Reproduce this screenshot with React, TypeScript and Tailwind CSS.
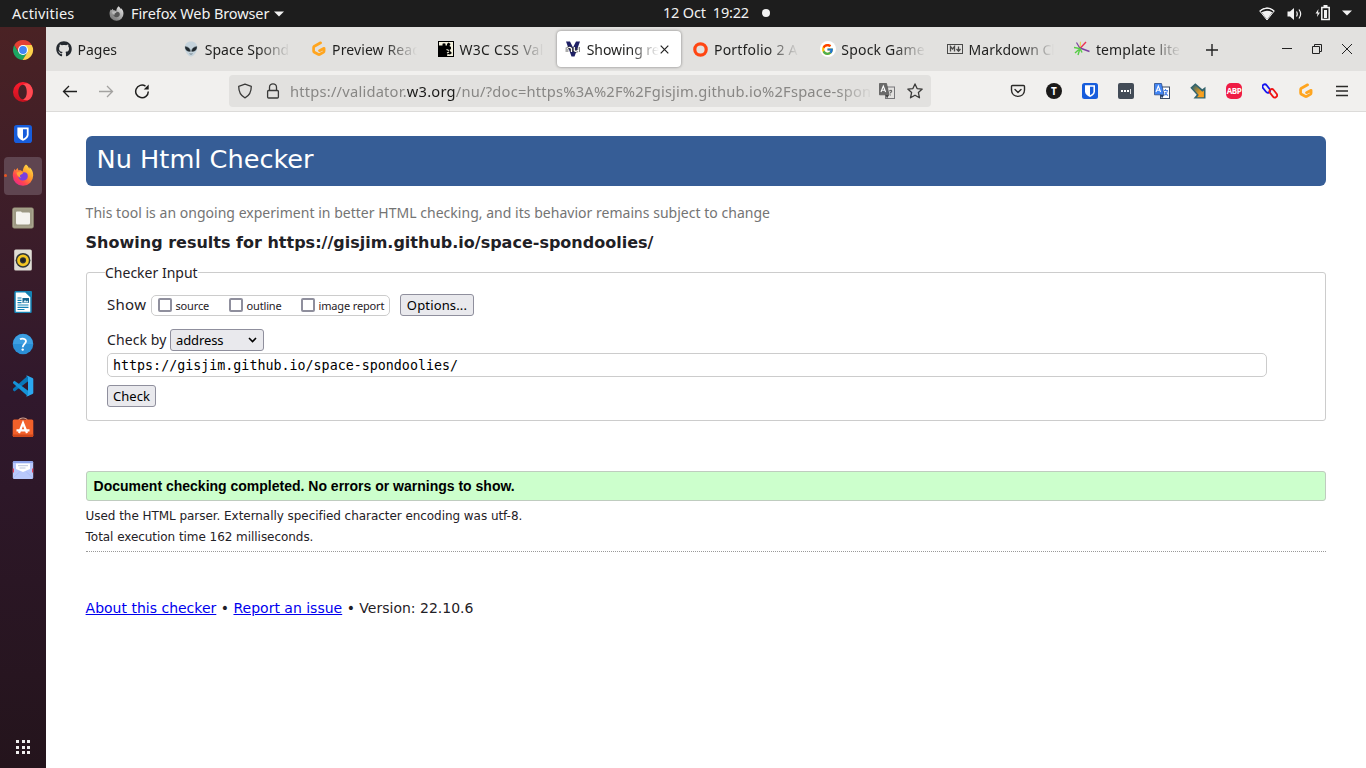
import React from "react";
import { FaGithub } from "react-icons/fa";
import { FcGoogle } from "react-icons/fc";

type P = { children?: React.ReactNode };

const Chrome = () => (
  <svg width="22" height="22" viewBox="0 0 22 22">
    <path d="M6.5 13.3 2.3 6A10 10 0 0 0 10.6 21L15.3 13.5Z" fill="#1da462" />
    <path d="M2.3 6A10 10 0 0 1 19.7 6H11L6.6 13Z" fill="#e34133" />
    <path d="M15.3 13.5 10.6 21A10 10 0 0 0 19.7 6H11Z" fill="#fcd04b" />
    <circle cx="11" cy="11" r="5" fill="#fff" />
    <circle cx="11" cy="11" r="3.9" fill="#4285f4" />
  </svg>
);
const Opera = () => (
  <svg width="22" height="22" viewBox="0 0 22 22">
    <defs>
      <linearGradient id="op" x1="0" x2="0" y1="0" y2="1">
        <stop offset="0" stopColor="#ff1b2d" />
        <stop offset="1" stopColor="#c1121f" />
      </linearGradient>
    </defs>
    <path d="M11 1a10 10 0 1 0 0 20 10 10 0 0 0 0-20Zm0 2.8c2.6 0 4.600 3.200 4.600 7.200s-2 7.200-4.600 7.200-4.700-3.200-4.700-7.200 2.100-7.200 4.700-7.200Z" fill="url(#op)" fillRule="evenodd" />
    <path d="M11 3.800c5 0 5 14.400 0 14.400 1.500 1.200 4 1.300 6 .500A10 10 0 0 0 17 3c-2-.8-4.500-.4-6 .8Z" fill="#ff4b53" />
  </svg>
);
const Bitwarden = ({ s = 16 }: { s?: number }) => (
  <svg width={s} height={s} viewBox="0 0 16 16">
    <rect width="16" height="16" rx="2.500" fill="#175ddc" />
    <path d="M3 2.200h10v6.300c0 2.500-2.300 4.500-5 5.500-2.700-1-5-3-5-5.500Z" fill="#fff" />
    <path d="M8 3.800h3.400v4.700c0 1.600-1.500 2.900-3.400 3.800Z" fill="#175ddc" />
  </svg>
);
const Firefox = ({ s = 22, gray = false }: { s?: number; gray?: boolean }) => {
  const id = gray ? "g" : "c";
  return (
    <svg width={s} height={s} viewBox="0 0 22 22">
      <defs>
        <linearGradient id={"fx" + id} x1="1" y1="0" x2="0.200" y2="1">
          <stop offset="0" stopColor={gray ? "#f2f2f2" : "#fff14f"} />
          <stop offset="0.450" stopColor={gray ? "#b5b5b5" : "#ff9a2b"} />
          <stop offset="0.750" stopColor={gray ? "#8c8c8c" : "#ff4450"} />
          <stop offset="1" stopColor={gray ? "#777" : "#e62690"} />
        </linearGradient>
      </defs>
      <path d="M14 0.500c2 1.200 2.400 3 3.500 4.300 0-.8 0-1.200-.2-1.800C20 5 21.300 8 21.200 11.500A10.200 10.200 0 0 1 .8 11.700C.7 8.700 1.700 6.300 2.900 4.700c.1.800.3 1.200.6 1.700.7-1.300 1.500-2 2.300-2.500 0 1 .3 1.800.8 2.500 1.600-.3 2.900.3 4 1.200C11 4.500 12 2 14 .5Z" fill={`url(#fx${id})`} />
      <path d="M7 9.200c1.500.8 3.300.6 4.200-.8 2.800-.3 4.800 1.300 4.600 4-.2 2.500-2.200 4-4.800 4s-5-2-4.700-5Z" fill={gray ? "#555" : "#7a3fe0"} />
      <path d="M4.500 8.600c2-1 3.800-.6 6.600.5-.8 1.300-2.200 1.300-3 2.200-.5.900.2 1.900 1.200 2.600C6.700 13.800 4.800 11.500 4.500 8.600Z" fill={gray ? "#bbb" : "#ffa436"} />
    </svg>
  );
};
const Files = () => (
  <svg width="22" height="22" viewBox="0 0 22 22">
    <rect x="0.500" y="0.800" width="21" height="20.400" rx="1.800" fill="#aaa48e" stroke="#8b866f" strokeWidth=".6" />
    <rect x="2" y="2.300" width="18" height="17" rx="1" fill="#9d9883" />
    <path d="M4 5.500q0-1 1-1h4l1 1h7q1 0 1 1V16q0 1.500-1.500 1.500h-11Q4 17.500 4 16Z" fill="#f5f3ef" />
  </svg>
);
const Rhythm = () => (
  <svg width="20" height="22" viewBox="0 0 20 22">
    <rect x="1.200" y=".6" width="17.600" height="20.800" rx="1.500" fill="#dfddd5" />
    <circle cx="10" cy="11.300" r="7.400" fill="#303638" />
    <circle cx="10" cy="11.300" r="4.500" fill="none" stroke="#f3c622" strokeWidth="2.800" />
    <circle cx="10" cy="11.300" r="2" fill="#222" />
  </svg>
);
const Writer = () => (
  <svg width="18" height="22" viewBox="0 0 18 22">
    <path d="M2 .7h9.500L17 6v14.500q0 1-1 1H2q-1 0-1-1V1.700q0-1 1-1Z" fill="#fff" stroke="#1583b5" strokeWidth="1.500" />
    <path d="M11.500 0 18 6.500V1q0-1-1-1Z" fill="#1583b5" />
    <path d="M3.500 7h4M3.500 9.300h4M3.500 11.600h4M3.500 14h11M3.500 16.300h11M3.500 18.500h7" stroke="#1583b5" strokeWidth="1.200" />
    <rect x="8.500" y="7" width="6.500" height="5" fill="#16648c" />
    <path d="m9 11.500 2-2.500 1.500 1.500 1-1 1 2Z" fill="#d7f0fa" />
  </svg>
);
const Help = () => (
  <svg width="22" height="22" viewBox="0 0 22 22">
    <circle cx="11" cy="11" r="10.300" fill="#2b8fd6" />
    <path d="M1 11a10 10 0 0 1 20 0Z" fill="#3d9fe2" />
    <path d="M8 6.300c2-1.200 6-.8 6 2 0 2.400-3.300 2.900-3.300 6" fill="none" stroke="#fff" strokeWidth="1.800" />
    <circle cx="10.700" cy="16.600" r="1.200" fill="#fff" />
  </svg>
);
const Code = () => (
  <svg width="22" height="22" viewBox="0 0 22 22">
    <path d="M15.500 1 1 13.700v1.500l1.500 1.200L16.500 6V1Z" fill="#0877b9" />
    <path d="M15.500 21 1 8.300V6.900l1.500-1.200L16.500 16v5Z" fill="#1593d8" />
    <path d="m15.500.7 5 2.300q.8.400.8 1.200v13.600q0 .8-.8 1.200l-5 2.300q-.9.300-1.500-.3l2-1V2l-2-1q.600-.6 1.500-.3Z" fill="#2ba8f0" />
  </svg>
);
const Software = () => (
  <svg width="22" height="22" viewBox="0 0 22 22">
    <path d="M6.700 4c0-4 8.600-4 8.600 0" fill="none" stroke="#d9a28c" strokeWidth="1.200" />
    <rect x=".700" y="2.500" width="20.600" height="17.500" rx="1.500" fill="#f2602a" />
    <path d="M.7 17.500h20.600v1q0 1.500-1.500 1.500H2.200Q.7 20 .7 18.500Z" fill="#cf481c" />
    <path d="m7 16 4-10 4 10M4.500 13.300h13" fill="none" stroke="#fff" strokeWidth="2.200" />
  </svg>
);
const Mail = () => (
  <svg width="22" height="22" viewBox="0 0 22 22">
    <rect x=".8" y="2" width="20.400" height="18" rx="1.500" fill="#b9c8fb" />
    <path d="M.8 9.500h1.200v4H.8Zm19.200 0h1.200v4H20Z" fill="#e2445c" />
    <path d="M.8 4v-.5Q.8 2 2.300 2h17.400q1.500 0 1.500 1.500V4Z" fill="#8ea4ea" />
    <path d="M4 4.500h14V10l-7 3L4 10Z" fill="#fff" />
    <path d="M6 6.700h10M7.500 9h6" stroke="#b6bfd8" strokeWidth=".9" />
    <path d="m1 19 7-6.500M21 19l-7-6.500" stroke="#a2b4f2" strokeWidth=".6" />
  </svg>
);
const Gitpod = () => (
  <svg width="16" height="16" viewBox="0 0 16 16">
    <path d="M9.600 1.800 3.400 5.200q-.8.500-.8 1.400v3.300q0 .9.800 1.400l3.700 2q.9.500 1.800 0l3.400-1.900q.8-.5.800-1.400V7.300L8.500 9.700" fill="none" stroke="#ffa51f" strokeWidth="2.700" strokeLinecap="round" strokeLinejoin="round" />
  </svg>
);
const Alien = () => (
  <svg width="16" height="16" viewBox="0 0 16 16">
    <path d="M8 .5c4 0 6.300 2.700 6.300 6.300 0 4-3.600 8.700-6.300 8.700S1.700 10.800 1.700 6.800C1.700 3.200 4 .5 8 .5Z" fill="#c5d3dc" />
    <path d="M2.300 5.700c2.700.2 4.800 1.800 5 4.600-2.900.4-5-1.300-5-4.600Zm11.400 0c-2.700.2-4.800 1.800-5 4.600 2.900.4 5-1.300 5-4.600Z" fill="#20282e" stroke="#20282e" strokeWidth=".6" />
    <path d="M6.500 12.700q1.500 1 3 0" stroke="#60707a" fill="none" strokeWidth=".8" />
  </svg>
);
const CssVal = () => (
  <svg width="16" height="16" viewBox="0 0 16 16">
    <rect width="16" height="16" fill="#000" />
    <path d="M1 1h14v14H1Z" fill="#f4f1dd" />
    <path d="M1 4.500h3.500V2.800q1.500-1.300 3 0v1.700H9V3l1.500-1.500L12.500 3l-1 2 1.500 1v2l-1.500 1 1 1.500L14 12l-2 1.500-2.500-.5-.5 2H1Z" fill="#000" />
    <path d="M8.500 8.500 11 9.500M9 12l2-1" stroke="#f4f1dd" strokeWidth="1.100" />
  </svg>
);
const NuIcon = () => (
  <svg width="16" height="16" viewBox="0 0 16 16">
    <path d="M1 .5h4l3 6 3-6h4L9.500 15.500h-3Z" fill="#1e2065" />
    <path d="M2 11V6.500M2 8q2-2.800 4.500-.5V11M9.300 6v3.500q1.500 1.800 4.500-.5V6M13.800 6v5" stroke="#333" strokeWidth="2.400" fill="none" />
    <path d="M2 11V6.500M2 8q2-2.800 4.500-.5V11M9.300 6v3.500q1.500 1.800 4.500-.5V6M13.800 6v5" stroke="#fff" strokeWidth="1.200" fill="none" />
  </svg>
);
const Ring = () => (
  <svg width="16" height="16" viewBox="0 0 16 16"><circle cx="8.500" cy="8.500" r="5.700" fill="none" stroke="#ff4613" strokeWidth="3.200" /></svg>
);
const GIcon = () => (
  <span className="flex size-4 items-center justify-center rounded-full bg-white"><FcGoogle size={13} /></span>
);
const Markdown = () => (
  <svg width="16" height="16" viewBox="0 0 16 16" fill="none" stroke="#4a4a49">
    <rect x=".5" y="3.500" width="15" height="9" strokeWidth="1" />
    <path d="M3.500 10.500v-5l2 2.500 2-2.500v5" strokeWidth="1.300" />
    <path d="M11.500 5.500v4M9.500 8l2 2.300 2-2.300" strokeWidth="1.300" />
  </svg>
);
const Burst = () => (
  <svg width="16" height="16" viewBox="0 0 16 16" fill="none" strokeWidth="1.200">
    <path d="M6 7.500 6.500.8" stroke="#e8d44c" />
    <path d="m6 7.500 6-6.500" stroke="#ee3355" strokeWidth="1.400" />
    <path d="M6 7.500 2.500 1.500" stroke="#7b3fa0" />
    <path d="m6 7 9.500 3.500" stroke="#7b3fa0" strokeWidth="1.500" />
    <path d="M0 6.500 6 7.500 4 14M6 7.500 1 12M6 7.500l2 4" stroke="#56cc45" strokeWidth="1.400" />
  </svg>
);

const tabs = [
  { icon: <FaGithub size={16} color="#24292f" />, name: "Pages", tr: "tracking-[0px]" },
  { icon: <Alien />, name: "Space Spond", tr: "tracking-[0px]" },
  { icon: <Gitpod />, name: "Preview Read", tr: "tracking-[0.1px]" },
  { icon: <CssVal />, name: "W3C CSS Val", tr: "tracking-[0.300px]" },
  { icon: <NuIcon />, name: "Showing re", tr: "tracking-[-0.05px]", active: true },
  { icon: <Ring />, name: "Portfolio 2 A", tr: "tracking-[0.2px]" },
  { icon: <GIcon />, name: "Spock Game", tr: "tracking-[0.200px]" },
  { icon: <Markdown />, name: "Markdown Cl", tr: "tracking-[0px]" },
  { icon: <Burst />, name: "template lite", tr: "tracking-[0.1px]" },
];

const Translate = ({ color = false }: { color?: boolean }) => (
  <svg width="16" height="16" viewBox="0 0 16 16">
    <rect x="6.500" y="4" width="9" height="11.500" fill={color ? "#fff" : "#e2e1df"} stroke={color ? "#3c4a63" : "#77777a"} />
    <path d={color ? "M10 7.500h4M11.500 6v1.500M13.500 7.500q-.5 3-3 5M11 9q1 2.500 3 3.500" : "M10.300 8q2.400-1.500 2.400.4-.2 1-1.400 1.400v.8m0 1v1"} stroke={color ? "#4d83e8" : "#666"} fill="none" strokeWidth="1.100" />
    <path d="M.5.500h7l2.500 11.300H.5Z" fill={color ? "#4285f4" : "#6a6a6a"} stroke={color ? "#2b4a85" : "#5a5a5a"} strokeWidth=".8" />
    <path d="m2 9 2.300-6 2.300 6M2.800 7.200h3" stroke="#fff" fill="none" strokeWidth="1.100" />
    <path d="m6.500 12 3.500 0-2 3.500Z" fill={color ? "#23406f" : "#444"} />
  </svg>
);
const Arrow = () => (
  <svg width="16" height="16" viewBox="0 0 16 16">
    <defs>
      <linearGradient id="arw" x1="0" y1="0" x2="1" y2="1">
        <stop offset=".05" stopColor="#33646d" />
        <stop offset=".45" stopColor="#b08a35" />
        <stop offset=".7" stopColor="#f9a01e" />
      </linearGradient>
    </defs>
    <path d="M.3 4.800 5.300.3l7 6 3.200-2.500v11.700H3.500l3.200-3.700Z" fill="#33646d" />
    <path d="M2.300 4.800 5.300 2.200l7 6.500 1.600-1.300v6.800H7l1.800-2.200Z" fill="url(#arw)" />
  </svg>
);
const Chain = () => (
  <svg width="16" height="16" viewBox="0 0 16 16" fill="none" strokeWidth="1.800">
    <rect x="2" y=".8" width="4.600" height="9.400" rx="2.300" transform="rotate(-38 4.300 5.500)" stroke="#1414f0" />
    <rect x="9" y="5.600" width="4.600" height="9.400" rx="2.300" transform="rotate(-38 11.300 10.300)" stroke="#f01414" />
  </svg>
);

const extensions = [
  <svg width="16" height="16" viewBox="0 0 16 16" fill="none" stroke="#2b2a28" strokeWidth="1.400" strokeLinecap="round" strokeLinejoin="round"><path d="M2.500 2.500h11q1 0 1 1V7c0 8.500-13 8.500-13 0V3.500q0-1 1-1Z" /><path d="m5 6.500 3 3 3-3" /></svg>,
  <span className="flex size-4 items-center justify-center rounded-full bg-[#1b1a19] font-['Noto_Sans'] text-[10px] font-bold text-white">T</span>,
  <Bitwarden />,
  <span className="flex size-4 items-center justify-center gap-[1px] rounded-[2px] bg-[#434c57]">
    <i className="size-[2px] bg-white" /><i className="size-[2px] bg-white" /><i className="size-[2px] bg-white" /><i className="h-[5px] w-px bg-white/80" />
  </span>,
  <Translate color />,
  <Arrow />,
  <span className="flex size-4 items-center justify-center rounded-[5px] bg-[#ef1c44] font-['Open_Sans'] text-[8px] font-bold tracking-[-0.4px] text-white">ABP</span>,
  <Chain />,
  <Gitpod />,
  <svg width="16" height="16" viewBox="0 0 16 16" stroke="#2b2a28" strokeWidth="1.300"><path d="M2 3.500h12M2 8h12M2 12.500h12" /></svg>,
];

function TopBar() {
  return (
    <header className="flex h-[27px] shrink-0 items-center bg-[#1d1d1d] pl-3 pr-[14px] text-[14.500px] text-[#f2f2f2]">
      <span className="w-[97px] tracking-[0.2px]">Activities</span>
      <Firefox s={15} gray />
      <span className="ml-[7px] w-[139px] whitespace-nowrap tracking-[-0.1px]">Firefox Web Browser</span>
      <svg className="ml-[4px]" width="10" height="6"><path d="M0 .5h10l-5 5Z" fill="#f2f2f2" /></svg>
      <span className="mb-px ml-[379px] w-[87px] whitespace-pre tracking-[-0.2px]">12 Oct  19:22</span>
      <span className="mb-px ml-[12px] size-2 rounded-full bg-[#f2f2f2]" />
      <div className="ml-auto flex items-center">
        <svg width="16" height="14" viewBox="0 0 16 14"><path d="M.8 4Q8-1.800 15.200 4L8 13Z" fill="none" stroke="#f2f2f2" strokeWidth="1" /><path d="M2.600 5.300Q8 2 13.400 5.300L8 12.500Z" fill="#f2f2f2" /><path d="M.8 4Q8-1.800 15.200 4" stroke="#f2f2f2" strokeWidth="1.300" fill="none" /></svg>
        <svg className="ml-3" width="16" height="14" viewBox="0 0 16 14"><path d="M.5 4.500H3L7 1v12L3 9.500H.5Z" fill="#f2f2f2" /><path d="M9.500 4.500q1.500 2.500 0 5M12 2.500q3.300 4.500 0 9" stroke="#f2f2f2" strokeWidth="1.200" fill="none" /></svg>
        <svg className="mb-px ml-3" width="16" height="16" viewBox="0 0 16 16"><path d="M3.500 4 .5 8.500h2L2 12l3-4.500H3Z" fill="#f2f2f2" /><rect x="6.800" y="2.500" width="7.400" height="12" fill="none" stroke="#f2f2f2" strokeWidth="1.500" /><path d="M8.500 0h4v2h-4ZM9 5h3v8H9Z" fill="#f2f2f2" /></svg>
        <svg className="mb-px ml-[11px]" width="10" height="6"><path d="M0 .5h10l-5 5Z" fill="#f2f2f2" /></svg>
      </div>
    </header>
  );
}

function Dock() {
  const icons = [<Chrome />, <Opera />, <Bitwarden s={18} />, <Firefox />, <Files />, <Rhythm />, <Writer />, <Help />, <Code />, <Software />, <Mail />];
  return (
    <nav className="flex w-[46px] shrink-0 flex-col items-center bg-linear-to-b from-[#4a2224] via-[#30182c] via-50% to-[#24141c] pb-[14px] pt-[2px]">
      {icons.map((icon, i) => (
        <div key={i} className="flex h-[42px] w-full items-center justify-center">
          {i === 3 ? (
            <div className="relative flex h-[38px] w-[38px] items-center justify-center rounded-[4px] bg-[#5f4550] pb-[2px]">
              {icon}
              <i className="absolute left-0 top-[17px] h-[3px] w-[3px] rounded-full bg-[#e95420]" />
            </div>
          ) : icon}
        </div>
      ))}
      <div className="mt-auto grid grid-cols-3 gap-[2.500px]">
        {Array.from({ length: 9 }, (_, i) => <i key={i} className="size-[3px] bg-[#f0eeee]" />)}
      </div>
    </nav>
  );
}

function TabStrip() {
  return (
    <div className="flex h-[44px] shrink-0 items-center bg-[#e2e1df] pl-[1px] text-[14px] text-[#1f1f1e]">
      {tabs.map((t) => (
        <div key={t.name} className="flex h-[36px] w-[127.300px] shrink-0 items-center">
          <div className={`ml-[1px] flex h-full w-[124px] items-center rounded-[4px] pl-2 ${t.active ? "bg-white shadow-[0_0_3px_rgba(0,0,0,0.45)]" : ""}`}>
            <span className="flex size-4 shrink-0 items-center justify-center">{t.icon}</span>
            <span className={`ml-[5.500px] shrink-0 whitespace-nowrap ${t.active ? "w-[72px] mask-[linear-gradient(to_right,#000_60%,transparent_100%)]" : "w-[85px] mask-[linear-gradient(to_right,#000_62%,transparent_100%)]"} ${t.tr}`}>{t.name}</span>
            {t.active && <svg className="ml-[1.500px]" width="9" height="9" viewBox="0 0 9 9"><path d="m.7.7 7.600 7.600M8.300.7.7 8.300" stroke="#222" strokeWidth="1.200" /></svg>}
          </div>
        </div>
      ))}
      <svg className="ml-[13px] mt-px" width="12" height="12"><path d="M0 6h12M6 0v12" stroke="#222" strokeWidth="1.400" /></svg>
      <div className="ml-auto mr-[14px] flex items-center gap-[20px]">
        <svg width="10" height="10"><path d="M0 4.500h10" stroke="#222" /></svg>
        <svg width="10" height="10"><path d="M.5 2.500h7v7h-7ZM2.500 2.500v-2h7v7h-2" fill="none" stroke="#222" /></svg>
        <svg width="10" height="10"><path d="m0 0 10 10M10 0 0 10" stroke="#222" /></svg>
      </div>
    </div>
  );
}

function NavBar() {
  return (
    <div className="flex h-[41px] shrink-0 items-center border-b border-[#dcdbd9] bg-[#f1f0ee] pl-[16px]">
      <div className="flex gap-[20px]">
        <svg width="16" height="16" fill="none" stroke="#1f1f1e" strokeWidth="1.300"><path d="M15 8.500H1.500M7 3 1.500 8.500 7 14" /></svg>
        <svg width="16" height="16" fill="none" stroke="#a3a2a0" strokeWidth="1.300"><path d="M1 8.500h13.500M9 3 14.500 8.500 9 14" /></svg>
        <svg width="16" height="16" fill="none" stroke="#1f1f1e" strokeWidth="1.500"><path d="M14.300 8.500A6.300 6.300 0 1 1 11.500 3.200" /><path d="M14.700 1.500v5h-5Z" fill="#1f1f1e" stroke="none" /></svg>
      </div>
      <div className="ml-[79px] flex h-[32px] w-[702px] items-center rounded-[4px] bg-[#e2e1df] pl-2">
        <svg width="16" height="16" fill="none" stroke="#3a3a39" strokeWidth="1.300"><path d="M8 1.200 14.300 3.300C14.300 9.500 12 13 8 14.800 4 13 1.700 9.500 1.700 3.300Z" strokeLinejoin="round" /></svg>
        <svg className="ml-3" width="16" height="16" fill="none" stroke="#3a3a39" strokeWidth="1.300"><rect x="2.600" y="7.500" width="10.800" height="7.500" rx="1" /><path d="M4.500 7.500V4.300a3.500 3.500 0 0 1 7 0V7.500" /></svg>
        <span className="ml-[9px] w-[583px] whitespace-nowrap text-[14.700px] tracking-[0.210px] text-[#888785] mask-[linear-gradient(to_right,#000_94%,transparent_100%)]">
          https://validator.<span className="text-[#1b1b1a]">w3.org</span>/nu/?doc=https%3A%2F%2Fgisjim.github.io%2Fspace-spon
        </span>
        <span className="ml-[6px]"><Translate /></span>
        <svg className="ml-3" width="16" height="16" fill="none" stroke="#3a3a39" strokeWidth="1.300" strokeLinejoin="round"><path d="m8 .9 2.100 4.700 5.100.5-3.800 3.500 1.100 5.200L8 12.200l-4.500 2.600 1.100-5.200L.8 6.100l5.100-.5Z" /></svg>
      </div>
      <div className="ml-[79px] flex gap-5">
        {extensions.map((e, i) => <span key={i} className="flex size-4 items-center justify-center">{e}</span>)}
      </div>
    </div>
  );
}

const Button = ({ children, className }: P & { className: string }) => (
  <button className={`flex h-[22px] items-center justify-center whitespace-nowrap rounded-[3px] border border-[#8f8f9d] bg-[#e9e9ed] pt-[2px] text-[13px] text-black ${className}`}>{children}</button>
);
const Check = ({ children, className }: P & { className: string }) => (
  <label className={`flex items-center whitespace-nowrap text-[11px] tracking-[-0.15px] ${className}`}>
    <span className="mb-px mr-[3.500px] size-[14px] shrink-0 rounded-[2px] border-2 border-[#8f8f9d] bg-white" />
    <span className="mt-[2px]">{children}</span>
  </label>
);

function Page() {
  return (
    <main className="flex min-h-0 flex-1 flex-col bg-white pl-[39.600px] pr-[40.400px] pt-6 text-[#1f2126]">
      <h1 className="h-[50px] rounded-[6px] bg-[#365d96] pl-[11px] font-['DejaVu_Sans'] text-[25.600px] leading-[46px] text-white">Nu Html Checker</h1>
      <p className="mt-[17px] h-5 text-[14px] leading-5 tracking-[0.025px] text-[#747474]"><span>This tool is an ongoing experiment in better HTML checking, and its behavior remains subject to change</span></p>
      <h2 className="mt-[10px] h-5 font-['DejaVu_Sans'] text-[16px] font-bold leading-5"><span>Showing results for https://gisjim.github.io/space-spondoolies/</span></h2>
      <fieldset className="mt-[11px] h-[157px] rounded-[3px] border border-[#cccccc] pl-[20.400px] pr-5">
        <legend className="-ml-[2px] h-[17px] whitespace-nowrap text-[14px] leading-[18px] tracking-[0px]">Checker Input</legend>
        <div className="mt-[13px] flex h-[22px] items-center">
          <span className="mb-[2px] w-[44px] text-[15px] tracking-[0.3px]">Show</span>
          <div className="mt-px flex h-[21px] w-[239px] items-center rounded-[5px] border border-[#cccccc] pl-[6px]">
            <Check className="w-[71px]">source</Check>
            <Check className="w-[72px]">outline</Check>
            <Check className="">image report</Check>
          </div>
          <Button className="ml-[10px] w-[74px] tracking-[0.15px]">Options...</Button>
        </div>
        <div className="mt-[13px] flex h-[22px] items-center">
          <span className="mb-[2px] w-[63px] whitespace-nowrap text-[14px] tracking-[0.1px]">Check by</span>
          <div className="flex h-[22px] w-[94px] items-center justify-between rounded-[3px] border border-[#8f8f9d] bg-[#e9e9ed] pl-[5px] pr-[6px] text-[13px] tracking-[-0.1px] text-black">
            <span className="mt-[2px]">address</span>
            <svg width="9" height="6" fill="none" stroke="#000" strokeWidth="1.600"><path d="m1 1 3.500 3.500L8 1" /></svg>
          </div>
        </div>
        <div className="mt-[2px] flex h-6 w-[1160px] items-center rounded-[5px] border border-[#cccccc] pl-[5px] pt-[2px] font-['DejaVu_Sans_Mono'] text-[13.333px] text-black"><span>https://gisjim.github.io/space-spondoolies/</span></div>
        <Button className="mt-2 w-[49px]">Check</Button>
      </fieldset>
      <div className="mt-[50px] flex h-[30px] shrink-0 items-center rounded-[3px] border border-[#bfccbf] bg-[#ccffcc] pl-[7px] font-['Liberation_Sans'] text-[14px] font-bold text-black"><span>Document checking completed. No errors or warnings to show.</span></div>
      <div className="mt-[5px] border-b border-dotted border-[#999] pb-[3px] font-['DejaVu_Sans'] text-[12px] leading-[21px] tracking-[-0.05px]">
        <p><span>Used the HTML parser. Externally specified character encoding was utf-8.</span></p>
        <p><span>Total execution time 162 milliseconds.</span></p>
      </div>
      <p className="mt-[46px] font-['DejaVu_Sans'] text-[14px] leading-5"><span><a className="text-[#0000ee] underline" href="#about">About this checker</a> • <a className="text-[#0000ee] underline" href="#issue">Report an issue</a> • Version: 22.10.6</span></p>
    </main>
  );
}

export default function App() {
  return (
    <div className="flex h-[768px] w-[1366px] flex-col overflow-hidden font-['Noto_Sans',sans-serif]">
      <TopBar />
      <div className="flex min-h-0 flex-1">
        <Dock />
        <div className="flex min-w-0 flex-1 flex-col">
          <TabStrip />
          <NavBar />
          <Page />
        </div>
      </div>
    </div>
  );
}
